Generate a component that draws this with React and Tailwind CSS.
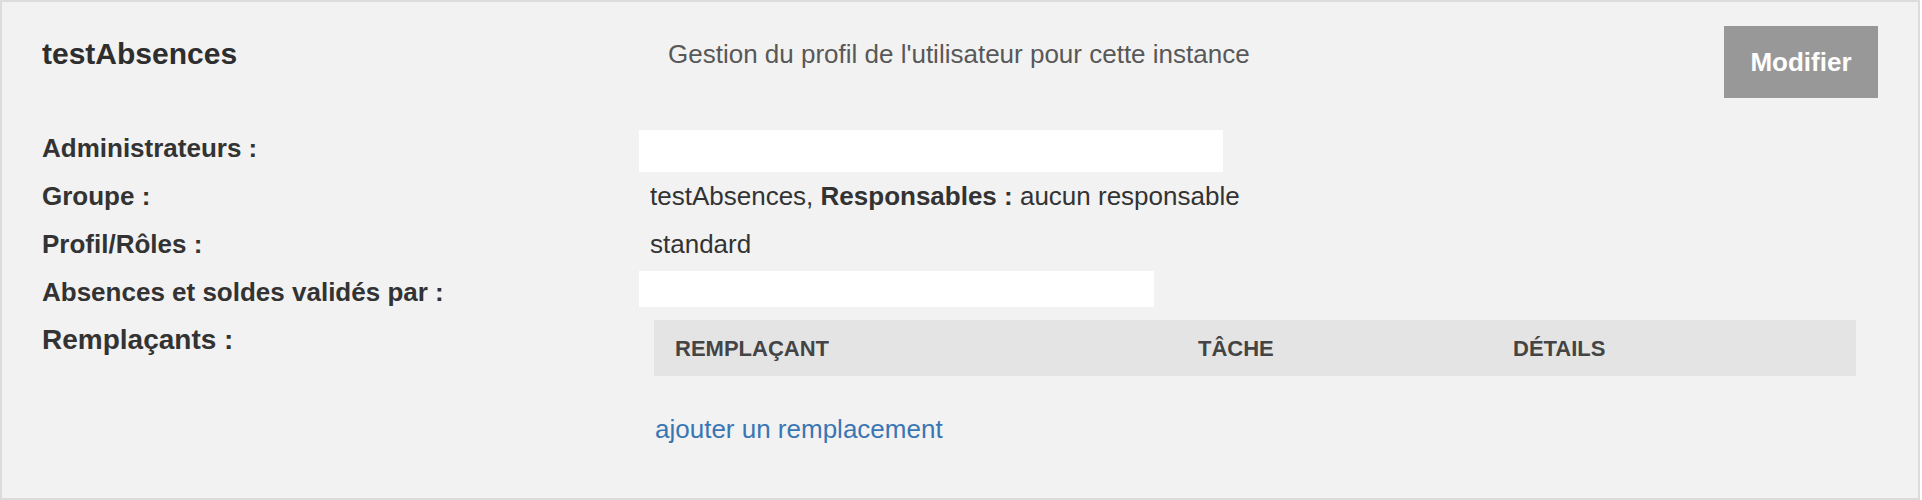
export default function App() {
  return (
    <div className="w-[1920px] h-[500px] bg-[#f2f2f2] border-2 border-[#dcdcdc] px-[40px] pt-[24px] text-[#333] font-['Liberation_Sans',Arial,sans-serif]">
      {/* en-tête */}
      <div className="flex items-start">
        <div className="w-[597px] text-[30px] font-bold leading-[56px] text-[#2e2e2e]">testAbsences</div>
        <div className="ml-[29px] text-[26px] leading-[56px] text-[#585858]">Gestion du profil de l'utilisateur pour cette instance</div>
        <button className="ml-auto h-[72px] w-[154px] bg-[#989898] text-white text-[26px] font-bold">Modifier</button>
      </div>

      <div className="mt-[32px] grid grid-cols-[597px_1fr] text-[26px]">
        <div className="h-[42px] leading-[36px] font-bold">Administrateurs :</div>
        <div className="h-[42px]">
          <div className="w-[584px] h-[42px] bg-white"></div>
        </div>

        <div className="h-[48px] flex items-center font-bold">Groupe :</div>
        <div className="h-[48px] flex items-center pl-[11px]">
          testAbsences,&nbsp;<span className="font-bold">Responsables :</span>&nbsp;aucun responsable
        </div>

        <div className="h-[48px] flex items-center font-bold">Profil/Rôles :</div>
        <div className="h-[48px] flex items-center pl-[11px]">standard</div>

        <div className="h-[48px] flex items-center font-bold">Absences et soldes validés par :</div>
        <div className="h-[48px] pt-[3px]">
          <div className="w-[515px] h-[36px] bg-white"></div>
        </div>

        <div className="text-[28px] font-bold leading-[48px]">Remplaçants :</div>
        <div className="pt-[4px]">
          <div className="ml-[15px] w-[1202px] h-[56px] bg-[#e4e4e4] grid grid-cols-[523px_315px_1fr] items-center text-[22px] font-bold text-[#444] uppercase">
            <div className="pl-[21px]">Remplaçant</div>
            <div className="pl-[21px]">Tâche</div>
            <div className="pl-[21px]">Détails</div>
          </div>
          <div className="mt-[35px] ml-[16px] leading-[36px]">
            <a href="#" className="text-[#3a76b4]">ajouter un remplacement</a>
          </div>
        </div>
      </div>
    </div>
  )
}
